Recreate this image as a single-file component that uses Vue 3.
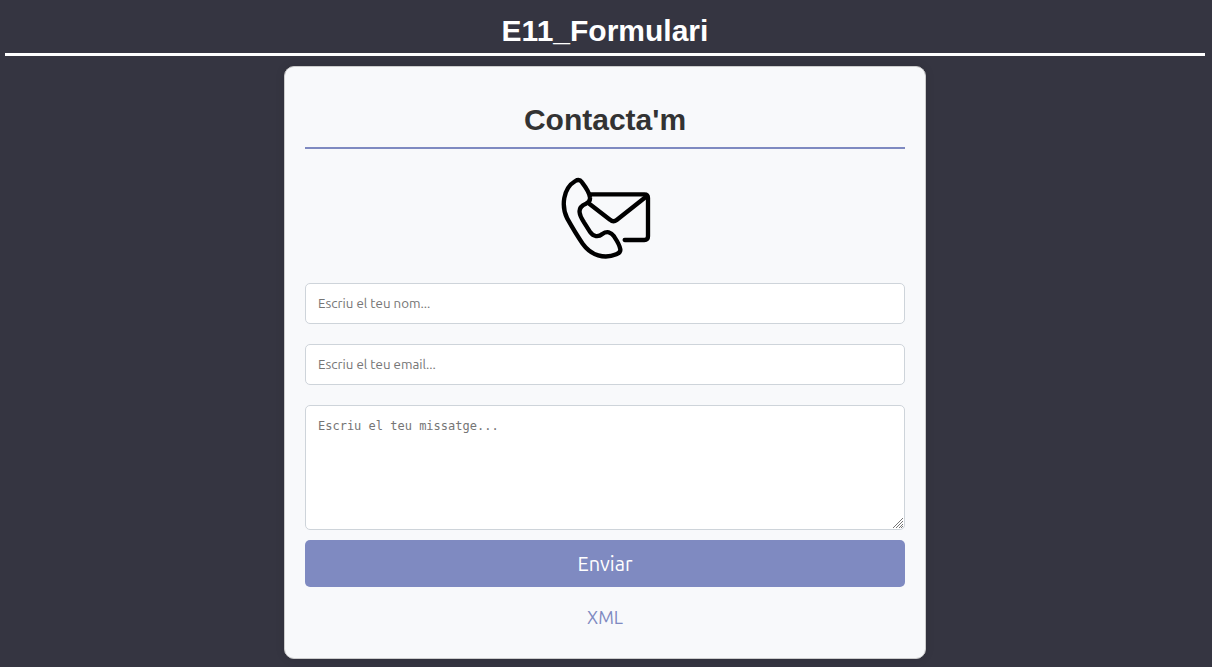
<script setup>
import { ref } from 'vue'

const name = ref('')
const email = ref('')
const message = ref('')
</script>

<template>
  <div class="page">
    <header class="header">
      <h1>E11_Formulari</h1>
    </header>
    <main class="card">
      <h2>Contacta'm</h2>
      <svg class="icon" viewBox="0 0 330 288" fill="none" stroke="#000" stroke-width="13" stroke-linecap="round" stroke-linejoin="round" aria-hidden="true">
        <path d="M120 73H283Q294 73 294 84V199Q294 210 283 210H224" />
        <path d="M115 99L180 149Q190 158 200 150L291 78" />
        <path d="M76 33C84 28 91 30 96 37C106 50 119 70 120 83C121 92 116 97 108 101C93 107 87 116 89 128C90 139 96 147 102 157L121 187C130 200 145 202 157 192C171 182 183 186 192 199C200 211 209 224 211 238C212 246 206 250 199 253C163 268 124 257 98 221C82 198 66 171 52 146C33 109 39 55 76 33Z" />
      </svg>
      <form @submit.prevent>
        <input v-model="name" type="text" name="name" aria-label="Nom" placeholder="Escriu el teu nom..." />
        <input v-model="email" type="email" name="email" aria-label="Email" placeholder="Escriu el teu email..." />
        <textarea v-model="message" name="message" aria-label="Missatge" placeholder="Escriu el teu missatge..."></textarea>
        <button type="submit">Enviar</button>
      </form>
      <a class="xml" href="#">XML</a>
    </main>
  </div>
</template>

<style>
body {
  background: #353541;
}
</style>

<style scoped>
.page {
  padding: 8px 7px 8px 5px;
  font-family: "Liberation Sans", Arial, sans-serif;
}

.header {
  border-bottom: 3px solid #fff;
  margin-bottom: 10px;
}

h1,
h2 {
  margin: 0;
  font-size: 30px;
  font-weight: bold;
  text-align: center;
}

h1 {
  color: #fff;
  line-height: 45px;
}

.card {
  box-sizing: border-box;
  display: flex;
  flex-direction: column;
  align-items: center;
  max-width: 642px;
  margin: 0 auto;
  padding: 30px 20px 28px;
  background: #f8f9fb;
  border: 1px solid #ccc;
  border-radius: 10px;
  box-shadow: 0 0 10px rgba(0, 0, 0, 0.1);
}

h2 {
  align-self: stretch;
  padding-bottom: 5px;
  color: #333;
  line-height: 45px;
  border-bottom: 2px solid #7f8ac1;
}

.icon {
  width: 110px;
  height: 96px;
  margin: 21px 0 17px;
}

form {
  display: flex;
  flex-direction: column;
  align-self: stretch;
}

input,
textarea {
  box-sizing: border-box;
  width: 100%;
  margin: 0 0 20px;
  padding: 12px;
  background: #fff;
  border: 1px solid #ced4da;
  border-radius: 5px;
}

input {
  height: 41px;
  font-family: "Ubuntu", "Noto Sans", sans-serif;
}

textarea {
  height: 125px;
  margin-bottom: 10px;
  font: 12px/16px "DejaVu Sans Mono", monospace;
  resize: vertical;
}

textarea::-webkit-resizer {
  background: url("data:image/svg+xml,%3Csvg xmlns='http://www.w3.org/2000/svg' viewBox='0 0 15 15'%3E%3Cpath d='M4 14L14 4M7 14L14 7M10 14L14 10M12 14L14 12' stroke='%23777'/%3E%3C/svg%3E") no-repeat;
}

input::placeholder,
textarea::placeholder {
  color: #757575;
}

button {
  height: 47px;
  padding: 0;
  color: #fff;
  font: 20px "Ubuntu", "Noto Sans", sans-serif;
  background: #7f8ac1;
  border: 0;
  border-radius: 5px;
  cursor: pointer;
}

.xml {
  margin-top: 18px;
  color: #7f8ac1;
  font: 18px/25px "Ubuntu", "Noto Sans", sans-serif;
  text-decoration: none;
}
</style>
